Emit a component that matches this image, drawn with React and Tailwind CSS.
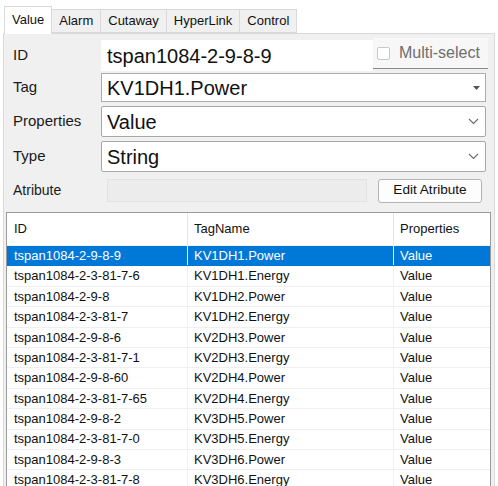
import { useState } from "react";

const rows = [
  ["tspan1084-2-9-8-9", "KV1DH1.Power"],
  ["tspan1084-2-3-81-7-6", "KV1DH1.Energy"],
  ["tspan1084-2-9-8", "KV1DH2.Power"],
  ["tspan1084-2-3-81-7", "KV1DH2.Energy"],
  ["tspan1084-2-9-8-6", "KV2DH3.Power"],
  ["tspan1084-2-3-81-7-1", "KV2DH3.Energy"],
  ["tspan1084-2-9-8-60", "KV2DH4.Power"],
  ["tspan1084-2-3-81-7-65", "KV2DH4.Energy"],
  ["tspan1084-2-9-8-2", "KV3DH5.Power"],
  ["tspan1084-2-3-81-7-0", "KV3DH5.Energy"],
  ["tspan1084-2-9-8-3", "KV3DH6.Power"],
  ["tspan1084-2-3-81-7-8", "KV3DH6.Energy"],
];

const tabs = ["Value", "Alarm", "Cutaway", "HyperLink", "Control"];

function Chevron() {
  return (
    <svg width="11" height="7" viewBox="0 0 11 7" className="mr-[6px]">
      <path d="M1 1 L5.5 5.5 L10 1" fill="none" stroke="#6b6b6b" strokeWidth="1.1" />
    </svg>
  );
}

function Triangle() {
  return (
    <svg width="7" height="4" viewBox="0 0 7 4" className="mr-[5px]">
      <path d="M0 0 H7 L3.5 4 Z" fill="#555" />
    </svg>
  );
}

function Label({ children, small }) {
  return (
    <div
      className={
        "w-[88px] shrink-0 text-[#1a1a1a] " + (small ? "text-[14px]" : "text-[15px]")
      }
    >
      {children}
    </div>
  );
}

export default function App() {
  const [selected, setSelected] = useState(0);
  const [tab, setTab] = useState(0);

  return (
    <div
      className="w-[498px] h-[486px] overflow-hidden bg-white flex flex-col"
      style={{ fontFamily: '"Liberation Sans", Arial, sans-serif' }}
    >
      {/* tab strip */}
      <div className="flex items-end h-[33px] pl-[4px] pt-[5px] shrink-0">
        {tabs.map((t, i) => (
          <div
            key={t}
            onClick={() => setTab(i)}
            className={
              "px-[7px] text-[13px] text-[#111] border border-[#d9d9d9] flex items-center " +
              (i === tab
                ? "h-[28px] bg-white border-b-0 relative z-10 -mb-[1px] pb-[2px]"
                : "h-[24px] bg-[#f0f0f0] -ml-[1px]")
            }
          >
            {t}
          </div>
        ))}
      </div>

      {/* tab page */}
      <div className="ml-[3px] w-[492px] flex-1 bg-[#f0f0f0] border border-[#d9d9d9] flex flex-col">
        <div className="flex items-center h-[33px] mt-[5px] pl-[9px]">
          <Label>ID</Label>
          <div className="w-[272px] h-[31px] bg-white flex items-center pl-[6px] text-[20px] text-[#111]">
            tspan1084-2-9-8-9
          </div>
          <div className="w-[115px] h-[31px] bg-[#f7f7f7] border-b border-[#8a8a8a] flex items-center pl-[4px] -mt-[4px]">
            <div className="w-[13px] h-[13px] border border-[#c8c8c8] bg-white rounded-[2px]" />
            <span className="ml-[9px] text-[16px] text-[#6e6e6e]">Multi-select</span>
          </div>
        </div>

        <div className="flex items-center mt-[1px] pl-[9px]">
          <Label>Tag</Label>
          <div className="w-[385px] h-[29px] bg-white border border-[#adadad] flex items-center justify-between pl-[5px] text-[20px] text-[#111]">
            <span>KV1DH1.Power</span>
            <Triangle />
          </div>
        </div>

        <div className="flex items-center mt-[4px] pl-[9px]">
          <Label>Properties</Label>
          <div className="w-[385px] h-[31px] bg-white border border-[#a8a8a8] rounded-[2px] flex items-center justify-between pl-[5px] text-[20px] text-[#111]">
            <span>Value</span>
            <Chevron />
          </div>
        </div>

        <div className="flex items-center mt-[4px] pl-[9px]">
          <Label>Type</Label>
          <div className="w-[385px] h-[31px] bg-white border border-[#a8a8a8] rounded-[2px] flex items-center justify-between pl-[5px] text-[20px] text-[#111]">
            <span>String</span>
            <Chevron />
          </div>
        </div>

        <div className="flex items-center mt-[6px] pl-[9px] h-[25px]">
          <Label small>Atribute</Label>
          <div className="ml-[6px] w-[260px] h-[23px] bg-[#ececec] border border-[#e2e2e2]" />
          <button className="ml-[11px] w-[104px] h-[24px] bg-[#fdfdfd] border border-[#b4b4b4] rounded-[3px] text-[13.6px] text-[#111]">
            Edit Atribute
          </button>
        </div>

        {/* grid */}
        <div className="mt-[9px] ml-[2px] w-[485px] flex-1 bg-white border border-[#9a9a9a] border-b-0 text-[13px] text-[#111] overflow-hidden">
          <div className="flex h-[33px] items-center border-b border-[#f0f0f0]">
            <div className="w-[181px] h-full pl-[7px] flex items-center border-r border-[#e5e5e5]">ID</div>
            <div className="w-[206px] h-full pl-[6px] flex items-center border-r border-[#e5e5e5]">TagName</div>
            <div className="flex-1 h-full pl-[6px] flex items-center">Properties</div>
          </div>
          {rows.map(([id, tag], i) => (
            <div
              key={id}
              onClick={() => setSelected(i)}
              className={
                "flex h-[20.4px] items-center border-b " +
                (i === selected
                  ? "bg-[#0078d7] text-white border-[#0078d7]"
                  : "border-[#efefef]")
              }
            >
              <div className="w-[181px] h-full pl-[7px] flex items-center border-r border-[#f0f0f0]">{id}</div>
              <div className="w-[206px] h-full pl-[6px] flex items-center border-r border-[#f0f0f0]">{tag}</div>
              <div className="flex-1 h-full pl-[6px] flex items-center">Value</div>
            </div>
          ))}
        </div>
      </div>
    </div>
  );
}
